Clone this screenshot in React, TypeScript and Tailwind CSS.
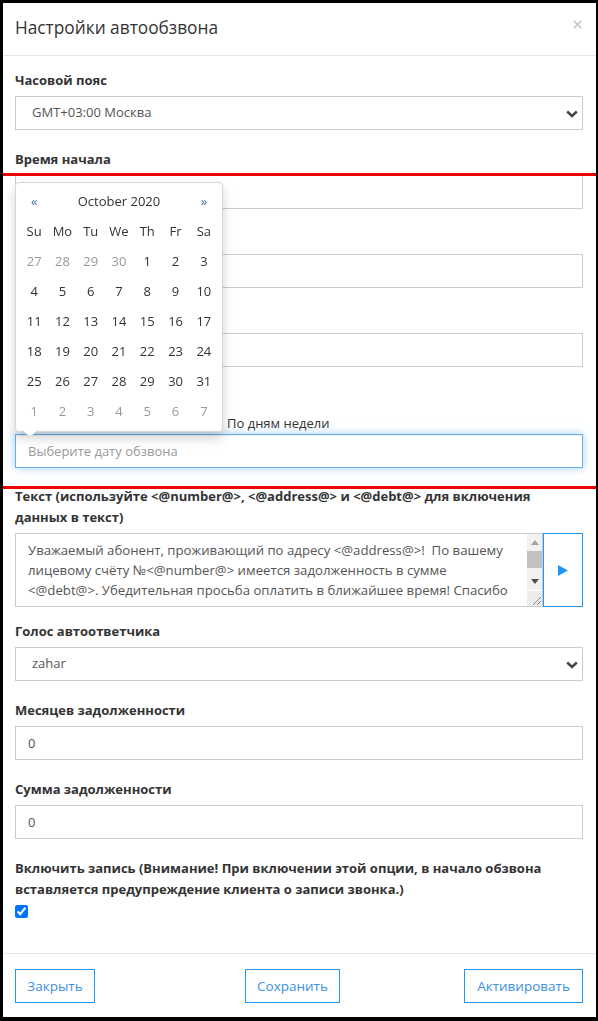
import React from "react";

const weeks: { d: number; muted: boolean }[][] = [
  [27, 28, 29, 30, 1, 2, 3].map((d, i) => ({ d, muted: i < 4 })),
  [4, 5, 6, 7, 8, 9, 10].map((d) => ({ d, muted: false })),
  [11, 12, 13, 14, 15, 16, 17].map((d) => ({ d, muted: false })),
  [18, 19, 20, 21, 22, 23, 24].map((d) => ({ d, muted: false })),
  [25, 26, 27, 28, 29, 30, 31].map((d) => ({ d, muted: false })),
  [1, 2, 3, 4, 5, 6, 7].map((d) => ({ d, muted: true })),
];

const dow = ["Su", "Mo", "Tu", "We", "Th", "Fr", "Sa"];

const MESSAGE =
  "Уважаемый абонент, проживающий по адресу <@address@>!  По вашему\nлицевому счёту №<@number@> имеется задолженность в сумме\n<@debt@>. Убедительная просьба оплатить в ближайшее время! Спасибо\nза своевременную оплату. С уважением, ваша управляющая компания.";

function Chevron() {
  return (
    <svg
      width="12"
      height="8"
      viewBox="0 0 12 8"
      className="pointer-events-none absolute right-[5px] top-[14px]"
    >
      <path d="M1.2 1.5 L6 6 L10.8 1.5" fill="none" stroke="#444" strokeWidth="2.4" />
    </svg>
  );
}

function Label({ children }: { children: React.ReactNode }) {
  return (
    <label className="mb-[5px] block text-[13px] font-bold leading-[21px] text-[#333]">
      {children}
    </label>
  );
}

function TextInput({ value }: { value?: string }) {
  return (
    <input
      type="text"
      defaultValue={value}
      className="block h-[34px] w-full border border-[#ccc] bg-white px-[12px] text-[13px] text-[#555] outline-none"
    />
  );
}

function SelectBox({ value }: { value: string }) {
  return (
    <div className="relative">
      <select
        defaultValue={value}
        className="block h-[34px] w-full appearance-none border border-[#ccc] bg-white pl-[16px] text-[13px] text-[#555] outline-none"
      >
        <option>{value}</option>
      </select>
      <Chevron />
    </div>
  );
}

// scrollbar of the message box, drawn since the headless browser hides native ones
function FakeScrollbar() {
  return (
    <>
      <div className="pointer-events-none absolute right-px top-px flex h-[56px] w-[15px] flex-col bg-[#f1f1f1]">
        <div className="flex h-[17px] items-center justify-center">
          <svg width="8" height="5" viewBox="0 0 8 5">
            <path d="M0 5 L4 0 L8 5 Z" fill="#a3a3a3" />
          </svg>
        </div>
        <div className="flex-1">
          <div className="h-[17px] bg-[#c1c1c1]" />
        </div>
        <div className="flex h-[17px] items-center justify-center">
          <svg width="8" height="5" viewBox="0 0 8 5">
            <path d="M0 0 L4 5 L8 0 Z" fill="#505050" />
          </svg>
        </div>
      </div>
      <div className="pointer-events-none absolute bottom-px right-px h-[15px] w-[15px] bg-[#ececec]">
        <svg width="15" height="15" viewBox="0 0 15 15">
          <path d="M14 6 L6 14 M14 10 L10 14" stroke="#8a8a8a" strokeWidth="1" />
        </svg>
      </div>
    </>
  );
}

function DatePicker() {
  return (
    <div className="absolute left-[12px] top-[179px] w-[208px] rounded-[4px] border border-[#d6d6d6] bg-white p-[4px] text-[13px] text-[#333] shadow-[0_6px_12px_rgba(0,0,0,0.175)]">
      <div className="grid grid-cols-7">
        <div className="flex h-[30px] items-center justify-center text-[#3b6ea8]">«</div>
        <div className="col-span-5 flex h-[30px] items-center justify-center">October 2020</div>
        <div className="flex h-[30px] items-center justify-center text-[#3b6ea8]">»</div>
        {dow.map((d) => (
          <div key={d} className="flex h-[30px] items-center justify-center">
            {d}
          </div>
        ))}
        {weeks.flat().map((c, i) => (
          <div
            key={i}
            className={`flex h-[30px] items-center justify-center ${c.muted ? "text-[#999]" : "text-[#333]"}`}
          >
            {c.d}
          </div>
        ))}
      </div>
      <svg width="16" height="8" viewBox="0 0 16 8" className="absolute left-[6px] top-full -mt-px">
        <path d="M0 0 L8 7 L16 0" fill="#fff" stroke="#d6d6d6" strokeWidth="1" />
        <path d="M1 0 L15 0" stroke="#fff" strokeWidth="1.5" />
      </svg>
    </div>
  );
}

export default function App() {
  return (
    <div className="relative h-[1021px] w-[598px] border-b-[4px] border-l-[3px] border-r-[2px] border-t-[3px] border-black bg-white font-['Open_Sans',sans-serif] text-[#333]">
      <div className="flex h-[53px] items-center justify-between border-b border-[#e5e5e5] pb-[3px] pl-[12px] pr-[14px]">
        <h4 className="text-[17.3px] font-normal leading-[25px] text-[#333]">Настройки автообзвона</h4>
        <svg width="9" height="9" viewBox="0 0 9 9" className="mb-[7px]">
          <path d="M0.8 0.8 L8.2 8.2 M8.2 0.8 L0.8 8.2" stroke="#c4c4c4" strokeWidth="1.5" />
        </svg>
      </div>

      <div className="pb-[35px] pl-[12px] pr-[13px] pt-[14px]">
        <div className="mb-[19px]">
          <Label>Часовой пояс</Label>
          <SelectBox value="GMT+03:00 Москва" />
        </div>
        <div className="mb-[19px]">
          <Label>Время начала</Label>
          <TextInput />
        </div>
        <div className="mb-[19px]">
          <Label>&nbsp;</Label>
          <TextInput />
        </div>
        <div className="mb-[19px]">
          <Label>&nbsp;</Label>
          <TextInput />
        </div>
        <div className="mb-[18px]">
          <Label>&nbsp;</Label>
          <div className="flex h-[22px] items-center pt-[2px] text-[13px] text-[#333]">
            <label className="flex w-[192px] items-center">
              <input type="radio" name="mode" defaultChecked className="m-0 h-[13px] w-[13px]" />
            </label>
            <label className="flex items-center gap-[7px]">
              <input type="radio" name="mode" className="m-0 h-[13px] w-[13px]" />
              По дням недели
            </label>
          </div>
          <input
            type="text"
            autoFocus
            placeholder="Выберите дату обзвона"
            className="block h-[34px] w-full border border-[#66afe9] bg-white px-[12px] text-[13px] text-[#555] outline-none shadow-[inset_0_1px_1px_rgba(0,0,0,0.075),0_0_8px_rgba(102,175,233,0.6)] placeholder:text-[#999]"
          />
        </div>
        <div className="mb-[14px]">
          <Label>
            Текст (используйте &lt;@number@&gt;, &lt;@address@&gt; и &lt;@debt@&gt; для включения
            <br />
            данных в текст)
          </Label>
          <div className="flex">
            <div className="relative min-w-0 flex-1">
              <textarea
                defaultValue={MESSAGE}
                className="block h-[74px] w-full resize-none overflow-hidden border border-[#ccc] bg-white py-[6px] pl-[12px] pr-[26px] text-[13.2px] leading-[20px] text-[#555] outline-none"
              />
              <FakeScrollbar />
            </div>
            <button
              type="button"
              className="flex w-[40px] shrink-0 items-center justify-center border border-[#2196f3] bg-white"
            >
              <svg width="10" height="11" viewBox="0 0 10 11">
                <path d="M0 0 L10 5.5 L0 11 Z" fill="#2196f3" />
              </svg>
            </button>
          </div>
        </div>
        <div className="mb-[19px]">
          <Label>Голос автоответчика</Label>
          <SelectBox value="zahar" />
        </div>
        <div className="mb-[19px]">
          <Label>Месяцев задолженности</Label>
          <TextInput value="0" />
        </div>
        <div className="mb-[19px]">
          <Label>Сумма задолженности</Label>
          <TextInput value="0" />
        </div>
        <div>
          <Label>
            Включить запись (Внимание! При включении этой опции, в начало обзвона
            <br />
            вставляется предупреждение клиента о записи звонка.)
          </Label>
          <input type="checkbox" defaultChecked className="m-0 mt-[3px] block h-[13px] w-[13px]" />
        </div>
      </div>

      <div className="flex items-start border-t border-[#e5e5e5] pl-[12px] pr-[13px] pt-[15px]">
        <button
          type="button"
          className="h-[34px] w-[80px] border border-[#2196f3] bg-white text-[13.5px] text-[#3d8fe0]"
        >
          Закрыть
        </button>
        <button
          type="button"
          className="ml-[150px] h-[34px] w-[95px] border border-[#2196f3] bg-white text-[13.5px] text-[#3d8fe0]"
        >
          Сохранить
        </button>
        <button
          type="button"
          className="ml-auto h-[34px] w-[119px] border border-[#2196f3] bg-white text-[13.5px] text-[#3d8fe0]"
        >
          Активировать
        </button>
      </div>

      <DatePicker />

      <div className="pointer-events-none absolute left-0 right-0 top-[170px] h-[3px] bg-[#ee0000]" />
      <div className="pointer-events-none absolute left-0 right-0 top-[483px] h-[3px] bg-[#ee0000]" />
    </div>
  );
}
